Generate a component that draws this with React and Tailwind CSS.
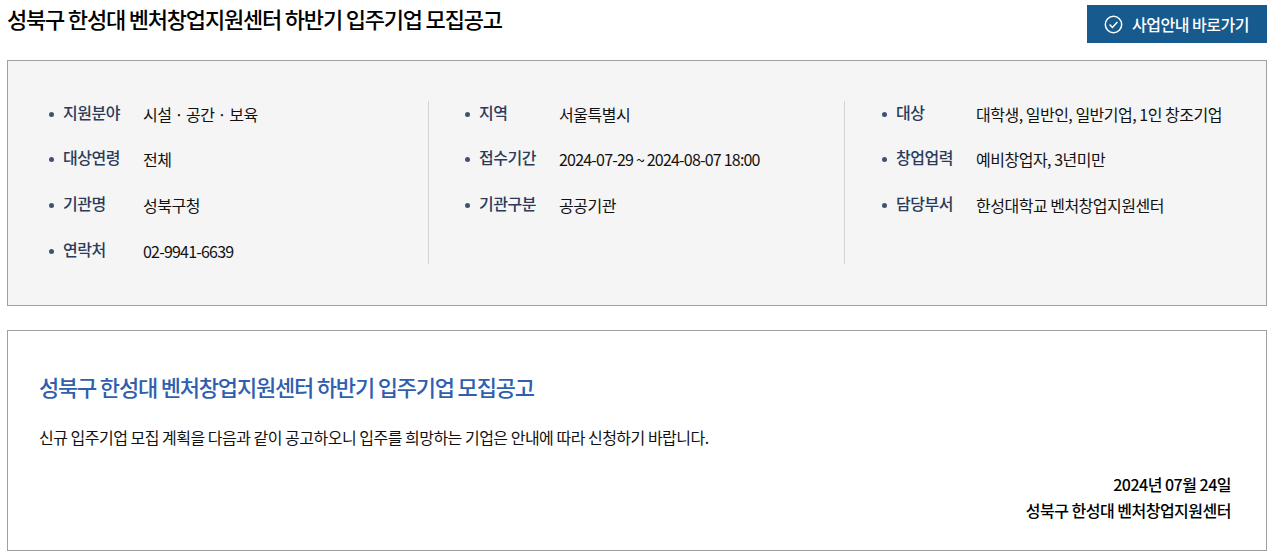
import React from "react";

const font = "font-['Noto_Sans_CJK_KR','Noto_Sans',sans-serif]";

const columns = [
  [
    ["지원분야", "시설 · 공간 · 보육"],
    ["대상연령", "전체"],
    ["기관명", "성북구청"],
    ["연락처", "02-9941-6639", true],
  ],
  [
    ["지역", "서울특별시"],
    ["접수기간", "2024-07-29 ~ 2024-08-07 18:00", true],
    ["기관구분", "공공기관"],
  ],
  [
    ["대상", "대학생, 일반인, 일반기업, 1인 창조기업"],
    ["창업업력", "예비창업자, 3년미만"],
    ["담당부서", "한성대학교 벤처창업지원센터"],
  ],
];

const InfoRow = ({ label, value, digits }) => (
  <li className="flex h-[45.7px] items-start">
    <span className="mt-[10.5px] ml-[1px] mr-[9px] h-[5px] w-[5px] rounded-full bg-[#3f5272]" />
    <span className="w-[80px] -mt-[1.5px] text-[16px] leading-[24px] font-medium tracking-[-0.5px] text-[#2c3b5a]">{label}</span>
    <span className={`mt-[0.5px] text-[16px] leading-[24px] text-[#111] ${digits ? "tracking-[-0.8px]" : "tracking-[-0.5px]"}`}>{value}</span>
  </li>
);

export default function App() {
  return (
    <div className={`${font} h-[551px] w-[1270px] overflow-hidden bg-white`}>
      <div className="flex h-[60px] items-start justify-between pr-[3px] pl-[7px]">
        <h1 className="mt-[3px] text-[22px] leading-[30px] font-medium tracking-[-1.2px] text-black">
          성북구 한성대 벤처창업지원센터 하반기 입주기업 모집공고
        </h1>
        <a className="mt-[5px] flex h-[38px] w-[180px] items-center gap-[9px] bg-[#165a8e] pl-[17px] text-[16px] font-medium tracking-[-0.5px] text-white">
          <svg width="19" height="19" viewBox="0 0 19 19" fill="none" stroke="currentColor" strokeWidth="1.5">
            <circle cx="9.5" cy="9.5" r="8.2" />
            <path d="M5.6 9.6l2.8 2.9 5-5.4" />
          </svg>
          사업안내 바로가기
        </a>
      </div>

      <section className="mx-[7px] flex h-[246px] w-[1260px] border border-[#a0a0a0] bg-[#f5f5f5] pt-[40px] pl-[40px]">
        <ul className="h-[163px] w-[380px]">
          {columns[0].map(([label, value, digits]) => (
            <InfoRow key={label} label={label} value={value} digits={digits} />
          ))}
        </ul>
        <ul className="h-[163px] w-[416px] border-l border-[#d4d4d4] pl-[35px]">
          {columns[1].map(([label, value, digits]) => (
            <InfoRow key={label} label={label} value={value} digits={digits} />
          ))}
        </ul>
        <ul className="h-[163px] w-[416px] border-l border-[#d4d4d4] pl-[36px]">
          {columns[2].map(([label, value, digits]) => (
            <InfoRow key={label} label={label} value={value} digits={digits} />
          ))}
        </ul>
      </section>

      <section className="mx-[7px] mt-[24px] h-[221px] w-[1260px] border border-[#a0a0a0] pt-[39px] pr-[35px] pl-[31px]">
        <h2 className="text-[22px] leading-[32px] font-medium tracking-[-1.2px] text-[#2f5fae]">
          성북구 한성대 벤처창업지원센터 하반기 입주기업 모집공고
        </h2>
        <p className="mt-[23px] text-[16px] leading-[24px] tracking-[-0.5px] text-[#111]">
          신규 입주기업 모집 계획을 다음과 같이 공고하오니 입주를 희망하는 기업은 안내에 따라 신청하기 바랍니다.
        </p>
        <div className="mt-[22px] text-right text-[16px] leading-[26px] font-medium tracking-[-0.5px] text-black">
          <p>2024년 07월 24일</p>
          <p>성북구 한성대 벤처창업지원센터</p>
        </div>
      </section>
    </div>
  );
}
